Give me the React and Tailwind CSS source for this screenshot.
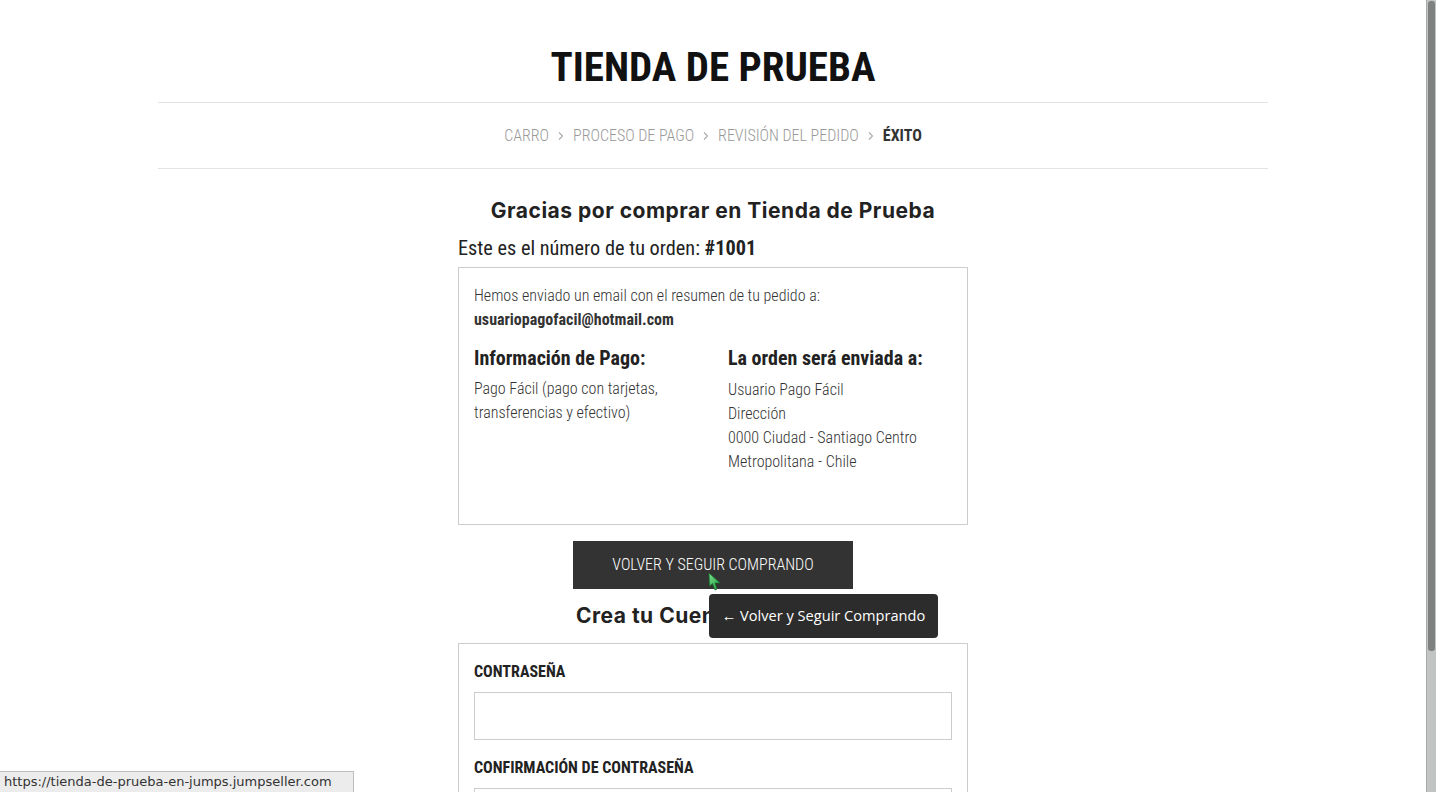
import React from "react";

const cond = { fontFamily: "'Roboto Condensed', Roboto, sans-serif" };
const mont = { fontFamily: "Inter, 'Noto Sans', sans-serif" };

export default function App() {
  return (
    <div className="relative h-[792px] w-[1436px] overflow-hidden bg-white flex">
      <div className="w-[1426px] h-full flex flex-col items-center">
        <div className="w-[1110px] flex flex-col items-center" style={cond}>
          <h1 className="font-stretch-condensed font-bold text-[41px] leading-none text-[#111] pt-[47px] pb-[14px]">
            TIENDA DE PRUEBA
          </h1>
          <div className="w-full border-t border-b border-[#e3e3e3] h-[67px] flex items-center justify-center gap-[8px] font-stretch-condensed font-light text-[16px] text-[#999]">
            <span>CARRO</span>
            <Chev />
            <span>PROCESO DE PAGO</span>
            <Chev />
            <span>REVISIÓN DEL PEDIDO</span>
            <Chev />
            <span className="font-bold text-[#333]">ÉXITO</span>
          </div>
        </div>
        <div className="w-[510px] flex flex-col">
          <h2 className="text-center font-bold text-[21px] text-[#222] mt-[28px] leading-[28px] tracking-[0.5px]" style={mont}>
            Gracias por comprar en Tienda de Prueba
          </h2>
          <p className="font-stretch-condensed text-[20.3px] text-[#222] mt-[8px] leading-[30px]" style={cond}>
            Este es el número de tu orden: <b className="font-bold">#1001</b>
          </p>
          <div className="border border-[#cccccc] h-[258px] px-[15px] pt-[16px] font-stretch-condensed text-[16px] text-[#333] mt-[4px]" style={cond}>
            <p className="font-light leading-[24px]">Hemos enviado un email con el resumen de tu pedido a:</p>
            <p className="font-bold leading-[24px]">usuariopagofacil@hotmail.com</p>
            <div className="grid grid-cols-2 mt-[13px]">
              <div>
                <h3 className="font-bold text-[20px] text-[#222] leading-[26px]">Información de Pago:</h3>
                <p className="font-light leading-[24px] mt-[6px] pr-[20px]">Pago Fácil (pago con tarjetas, transferencias y efectivo)</p>
              </div>
              <div className="pl-[15px]">
                <h3 className="font-bold text-[20px] text-[#222] leading-[26px]">La orden será enviada a:</h3>
                <p className="font-light leading-[24px] mt-[7px]">
                  Usuario Pago Fácil<br />Dirección<br />0000 Ciudad - Santiago Centro<br />Metropolitana - Chile
                </p>
              </div>
            </div>
          </div>
          <button className="self-center mt-[16px] w-[280px] h-[48px] bg-[#333333] text-white font-stretch-condensed font-light text-[16px]" style={cond}>
            VOLVER Y SEGUIR COMPRANDO
          </button>
          <h2 className="text-center font-bold text-[21px] text-[#222] mt-[13px] leading-[28px] tracking-[0.5px]" style={mont}>
            Crea tu Cuenta de Cliente
          </h2>
          <div className="border border-[#cccccc] mt-[13px] px-[15px] pt-[18px] h-[200px] font-stretch-condensed" style={cond}>
            <label className="block font-bold text-[16px] text-[#222] leading-[20px]">CONTRASEÑA</label>
            <div className="mt-[10px] h-[48px] border border-[#cccccc]" />
            <label className="block font-bold text-[16px] text-[#222] leading-[20px] mt-[18px]">CONFIRMACIÓN DE CONTRASEÑA</label>
            <div className="mt-[10px] h-[48px] border border-[#cccccc]" />
          </div>
        </div>
      </div>
      <div className="w-[10px] h-full bg-[#c2c3c3] border-l border-[#a9a9a9] flex justify-center pt-[1px]">
        <div className="w-[7px] h-[650px] rounded-[3px] bg-[#7f8080]" />
      </div>

      {/* tooltip */}
      <div className="absolute left-[709px] top-[594px] w-[229px] h-[44px] rounded-[4px] bg-[#2c2c2c] text-white text-[14.6px] flex items-center justify-center" style={{ fontFamily: "'Open Sans', 'Noto Sans', sans-serif" }}>
        ← Volver y Seguir Comprando
      </div>
      {/* cursor */}
      <svg className="absolute left-[707px] top-[571px]" width="16" height="22" viewBox="0 0 16 22">
        <defs>
          <linearGradient id="cg" x1="0" y1="0" x2="1" y2="1">
            <stop offset="0" stopColor="#7be08e" />
            <stop offset="1" stopColor="#1f9a3c" />
          </linearGradient>
        </defs>
        <path d="M2 2 L2.5 15 L5.5 12.5 L8 19 L10 18 L8 12 L13 12 Z" fill="url(#cg)" stroke="#15702c" strokeWidth="0.8" strokeLinejoin="round" />
      </svg>
      {/* status bar */}
      <div className="absolute left-0 bottom-0 h-[21px] w-[354px] bg-[#ececec] border-t border-r border-[#bdbdbd] text-[13px] text-[#333] pl-[4px] leading-[20px]" style={{ fontFamily: "'DejaVu Sans', sans-serif" }}>
        https://tienda-de-prueba-en-jumps.jumpseller.com
      </div>
    </div>
  );
}

function Chev() {
  return (
    <svg width="8" height="10" viewBox="0 0 8 10">
      <path d="M2 1.5 L5.5 5 L2 8.5" fill="none" stroke="#aaa" strokeWidth="1.1" />
    </svg>
  );
}
